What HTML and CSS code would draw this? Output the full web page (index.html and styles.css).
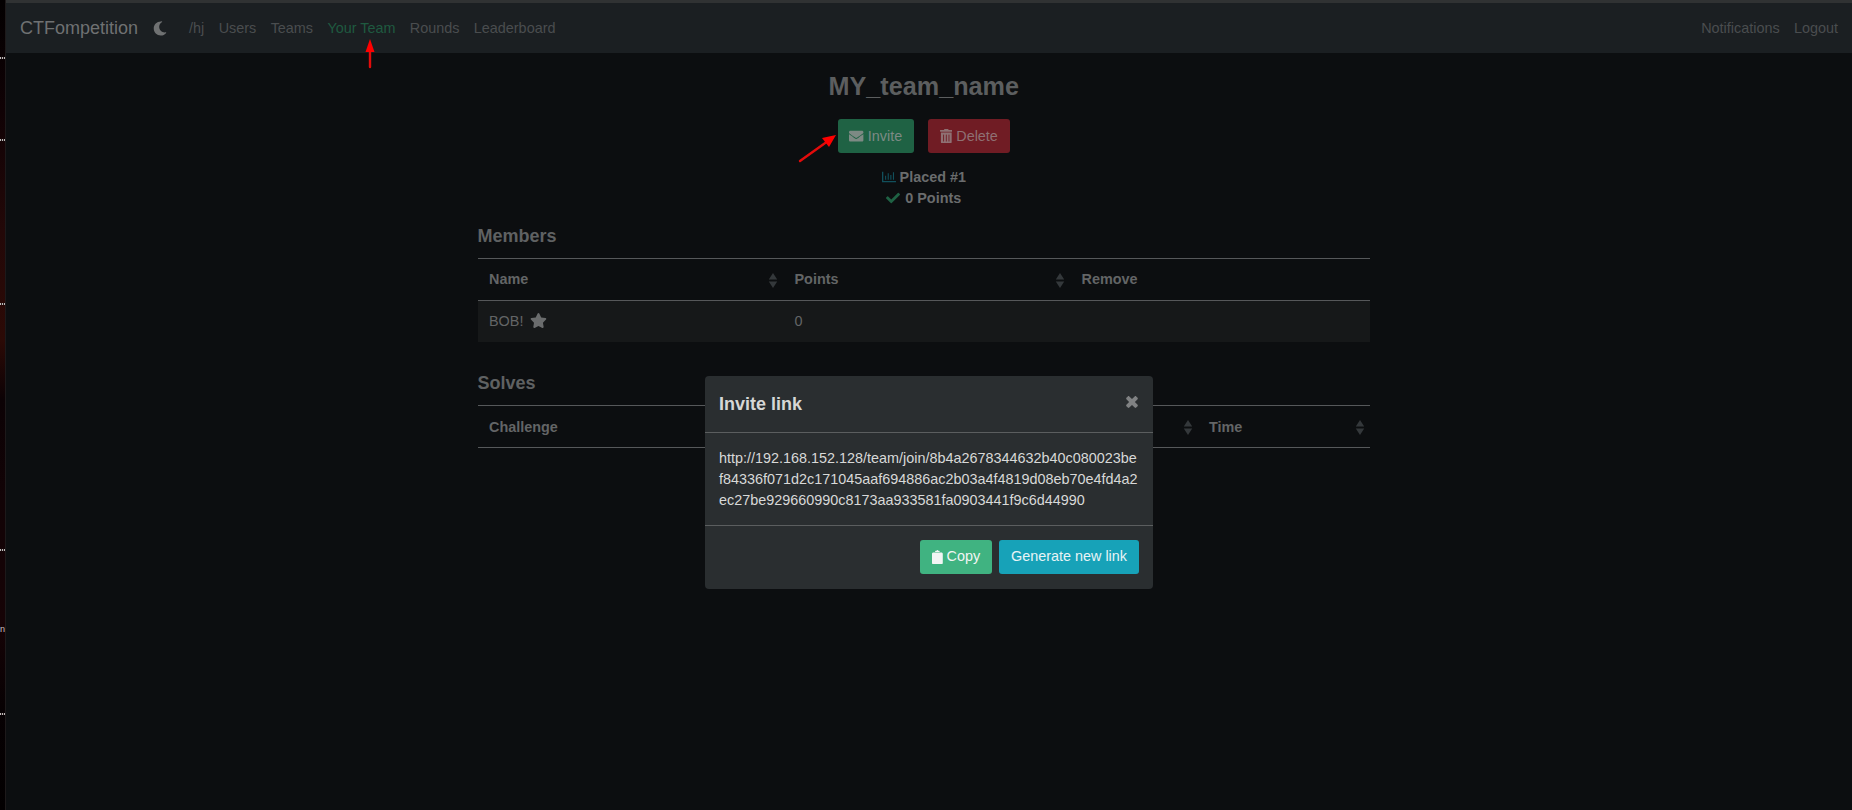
FILE: index.html
```html
<!DOCTYPE html>
<html lang="en">
<head>
<meta charset="utf-8">
<title>MY_team_name</title>
<link rel="stylesheet" href="styles.css">
</head>
<body>
<div class="desktop-strip">
  <i class="tick tick-a"></i><i class="tick tick-b"></i><i class="tick tick-c"></i><i class="tick tick-d"></i><span class="tick-n">n</span><i class="tick tick-e"></i>
</div>
<div class="page">
  <nav class="navbar">
    <a class="brand">CTFompetition</a>
    <svg class="moon" viewBox="0 0 512 512"><path fill="currentColor" d="M283 512c79 0 151-36 199-95 7-9-1-22-12-20-127 24-244-73-244-202 0-74 40-142 104-179 10-6 8-21-4-23A256 256 0 0 0 283 0C142 0 27 115 27 256s115 256 256 256z"/></svg>
    <div class="nav-left">
      <a>/hj</a><a>Users</a><a>Teams</a><a class="active">Your Team</a><a>Rounds</a><a>Leaderboard</a>
    </div>
    <div class="nav-right"><a>Notifications</a><a>Logout</a></div>
  </nav>
  <main class="content">
    <h1>MY_team_name</h1>
    <div class="actions">
      <button class="btn btn-invite"><svg viewBox="0 0 512 512"><path fill="currentColor" d="M502 191c4-3 10 0 10 5v204c0 26-22 48-48 48H48c-26 0-48-22-48-48V196c0-5 6-8 10-5 22 17 52 39 154 113 21 15 57 48 92 48s72-33 92-48c102-74 132-96 154-113zM256 320c23 0 57-29 74-41 133-97 143-105 174-129 6-5 8-12 8-19v-19c0-26-22-48-48-48H48C22 64 0 86 0 112v19c0 7 2 14 8 19 31 24 41 32 174 129 17 12 51 41 74 41z"/></svg>Invite</button>
      <button class="btn btn-delete"><svg viewBox="0 0 448 512"><path fill="currentColor" d="M32 464a48 48 0 0 0 48 48h288a48 48 0 0 0 48-48V128H32zm272-256a16 16 0 0 1 32 0v224a16 16 0 0 1-32 0zm-96 0a16 16 0 0 1 32 0v224a16 16 0 0 1-32 0zm-96 0a16 16 0 0 1 32 0v224a16 16 0 0 1-32 0zM432 32H312l-9.400-18.700A24 24 0 0 0 281.100 0H166.800a23.720 23.720 0 0 0-21.400 13.300L136 32H16A16 16 0 0 0 0 48v32a16 16 0 0 0 16 16h416a16 16 0 0 0 16-16V48a16 16 0 0 0-16-16z"/></svg>Delete</button>
    </div>
    <div class="stats">
      <div class="stat"><svg class="stat-chart" viewBox="0 0 512 512"><path fill="currentColor" d="M500 400c7 0 12 5 12 12v24c0 7-5 12-12 12H12c-7 0-12-5-12-12V76c0-7 5-12 12-12h24c7 0 12 5 12 12v324zM112 360V212h40v148zm96 0V116h40v244zm96 0V180h40v180zm96 0V84h40v276z"/></svg>Placed #1</div>
      <div class="stat"><svg class="stat-check" viewBox="0 0 512 512"><path fill="currentColor" d="M174 439 7 273a26 26 0 0 1 0-36l36-36a26 26 0 0 1 36 0l113 112L433 73a26 26 0 0 1 36 0l36 36a26 26 0 0 1 0 36L210 439a26 26 0 0 1-36 0z"/></svg>0 Points</div>
    </div>

    <h2 class="members-title">Members</h2>
    <table class="members">
      <thead><tr><th class="sorted">Name<svg class="sort" viewBox="0 0 10 16"><path fill="currentColor" d="M5 0l4.500 7H.5zM5 16l4.500-7H.5z"/></svg></th><th class="sorted">Points<svg class="sort" viewBox="0 0 10 16"><path fill="currentColor" d="M5 0l4.500 7H.5zM5 16l4.500-7H.5z"/></svg></th><th>Remove</th></tr></thead>
      <tbody><tr><td>BOB! <svg class="star" viewBox="0 0 576 512"><path fill="currentColor" d="M259 18 194 150 47 171c-26 4-37 36-18 55l106 103-25 146c-5 26 23 46 46 34l131-69 131 69c23 12 51-8 46-34l-25-146 106-103c19-19 8-51-18-55l-147-21-65-132c-12-24-46-24-56 0z"/></svg></td><td>0</td><td></td></tr></tbody>
    </table>

    <h2 class="solves-title">Solves</h2>
    <table class="solves">
      <thead><tr><th class="col-a">Challenge</th><th class="col-b sorted"><svg class="sort" viewBox="0 0 10 16"><path fill="currentColor" d="M5 0l4.500 7H.5zM5 16l4.500-7H.5z"/></svg></th><th class="col-c sorted">Time<svg class="sort" viewBox="0 0 10 16"><path fill="currentColor" d="M5 0l4.500 7H.5zM5 16l4.500-7H.5z"/></svg></th></tr></thead>
    </table>
  </main>
</div>

<section class="modal">
  <header class="modal-head"><h3>Invite link</h3><svg class="close" viewBox="0 0 352 352"><path fill="currentColor" d="M261 176 340 97c12-12 12-32 0-44L299 12c-12-12-32-12-44 0L176 91 97 12C85 0 65 0 53 12L12 53C0 65 0 85 12 97L91 176 12 255C0 267 0 287 12 299L53 340c12 12 32 12 44 0L176 261 255 340c12 12 32 12 44 0L340 299c12-12 12-32 0-44z"/></svg></header>
  <div class="modal-body">http://192.168.152.128/team/join/8b4a2678344632b40c080023bef84336f071d2c171045aaf694886ac2b03a4f4819d08eb70e4fd4a2ec27be929660990c8173aa933581fa0903441f9c6d44990</div>
  <footer class="modal-foot">
    <button class="btn btn-copy"><svg viewBox="0 0 384 512"><path fill="currentColor" d="M0 136c0-26 22-48 48-48h288c26 0 48 22 48 48v328c0 26-22 48-48 48H48c-26 0-48-22-48-48zM112 72V48c0-10 8-18 18-18h32C166 12 178 0 192 0s26 12 30 30h32c10 0 18 8 18 18v24z"/></svg>Copy</button>
    <button class="btn btn-generate">Generate new link</button>
  </footer>
</section>

<svg class="arrow arrow-up" viewBox="0 0 14 30"><path d="M7 12V28" stroke="#e30b0b" stroke-width="2.4" stroke-linecap="round"/><path d="M7 0l4.500 13h-9z" fill="#f00"/></svg>
<svg class="arrow arrow-diag" viewBox="0 0 40 30"><path d="M2 28 30 8" stroke="#e30b0b" stroke-width="2.4" stroke-linecap="round"/><path d="M38 2 31 14 24 5z" fill="#f00"/></svg>
</body>
</html>
```

FILE: styles.css
```css
* { box-sizing: border-box; }
html, body { margin: 0; height: 100%; }
body {
  display: flex;
  position: relative;
  height: 810px;
  overflow: hidden;
  background: #0c0e10;
  color: #6a6c6d;
  font-family: "Liberation Sans", Arial, sans-serif;
  font-size: 14.4px;
  line-height: 21.6px;
}
.desktop-strip {
  flex: 0 0 6px;
  position: relative;
  background: linear-gradient(180deg, #030001 0, #100205 110px, #230808 230px, #2c0a06 340px, #0c0205 400px, #120306 500px, #160306 620px, #070103 710px, #030001 810px);
  border-right: 1px solid #1d191a;
}
.tick { position: absolute; left: 0; width: 5px; height: 2px; background: repeating-linear-gradient(90deg, #bdb8b8 0 1px, #2a2020 1px 2px); }
.tick-a { top: 57px; } .tick-b { top: 139px; } .tick-c { top: 303px; } .tick-d { top: 549px; } .tick-e { top: 713px; }
.tick-n { position: absolute; left: 0; top: 619px; color: #c8c0c0; font-size: 9px; }
.page { flex: 1; min-width: 0; }
.navbar {
  display: flex;
  align-items: center;
  height: 53px;
  padding: 2px 14px 0 14px;
  background: #1b1f22;
  border-top: 3px solid #303233;
}
.navbar a { color: #4a4d4f; }
.navbar .brand { color: #6f7172; font-size: 18px; }
.moon { width: 14px; height: 15px; margin: 0 0 2px 15px; color: #6f7172; }
.nav-left { display: flex; gap: 14.4px; margin-left: 22px; }
.nav-left .active { color: #1f5a40; }
.nav-right { display: flex; gap: 14.4px; margin-left: auto; }
.content { width: 892.500px; margin-left: 471.500px; display: flow-root; }
h1 { margin: 17.500px 0 0; text-align: center; font-size: 25.200px; line-height: 30px; font-weight: 700; color: #5c5e5f; }
.actions { display: flex; justify-content: center; gap: 14px; margin-top: 18.500px; }
.btn {
  display: inline-flex; align-items: center; justify-content: center;
  height: 34px; padding: 0; border: 0; border-radius: 3px;
  font: 14.4px/21.6px "Liberation Sans", Arial, sans-serif;
}
.btn svg { height: 14.4px; margin-right: 4px; }
.actions .btn { padding-top: 2px; }
.actions .btn svg { margin-bottom: 2px; }
.btn-invite { width: 76px; background: #1f6244; color: #7d8a84; }
.btn-delete { width: 82px; background: #701c24; color: #8f7073; }
.btn-copy { width: 72px; background: #40b381; color: #f2f5f4; }
.btn-generate { width: 140px; background: #17a2b8; color: #e8f4f6; }
.stats { margin-top: 13.600px; }
.stat { display: flex; justify-content: center; align-items: center; font-weight: 700; line-height: 21px; color: #6a6c6d; }
.stat-chart { width: 14px; height: 14px; margin-right: 4px; color: #11505c; }
.stat-check { width: 14px; height: 14px; margin-right: 5px; color: #1f6244; }
h2 { margin: 0; font-size: 18px; line-height: 21.6px; font-weight: 700; color: #5f6162; }
.members-title { margin-top: 17.500px; }
.solves-title { margin-top: 31px; }
table { width: 100%; border-collapse: collapse; table-layout: fixed; margin-top: 10.300px; }
th, td { height: 42px; padding: 1px 11.500px 0; text-align: left; color: #636566; }
th { font-weight: 700; padding-top: 1px; border-top: 1px solid #56585a; border-bottom: 1px solid #56585a; position: relative; }
td { background: #161819; }
.sort { position: absolute; right: 5px; top: 14px; width: 10px; height: 15px; color: #34383b; }
.members th:nth-child(1) { width: 305.500px; }
.members th:nth-child(2) { width: 287px; }
.solves .col-a { width: 720px; }
.solves .col-c { width: 172.500px; }
.solves .col-b { width: 0; padding: 0; }
.star { width: 17px; height: 15px; vertical-align: -2px; margin-left: 3px; color: #6a6c6d; }
.modal {
  position: absolute; left: 705px; top: 376px; width: 448px; height: 213px;
  display: flex; flex-direction: column;
  background: #2a2e30; border-radius: 4px; color: #d8d9d8;
}
.modal-head { display: flex; justify-content: space-between; align-items: flex-start; height: 57px; padding: 15px 15px 0 14px; border-bottom: 1px solid #5b5e5f; }
.modal-head h3 { margin: 0; font-size: 18px; line-height: 26px; font-weight: 700; color: #d6d7d5; }
.close { width: 12px; height: 12px; margin-top: 5px; color: #808283; }
.modal-body { height: 92px; padding: 14.500px 14px 0; line-height: 21px; word-break: break-all; }
.modal-foot { display: flex; justify-content: flex-end; gap: 7px; padding: 14px; border-top: 1px solid #5b5e5f; }
.arrow { position: absolute; overflow: visible; }
.arrow-up { left: 363px; top: 39px; width: 14px; height: 30px; }
.arrow-diag { left: 798px; top: 133px; width: 40px; height: 30px; }
```
